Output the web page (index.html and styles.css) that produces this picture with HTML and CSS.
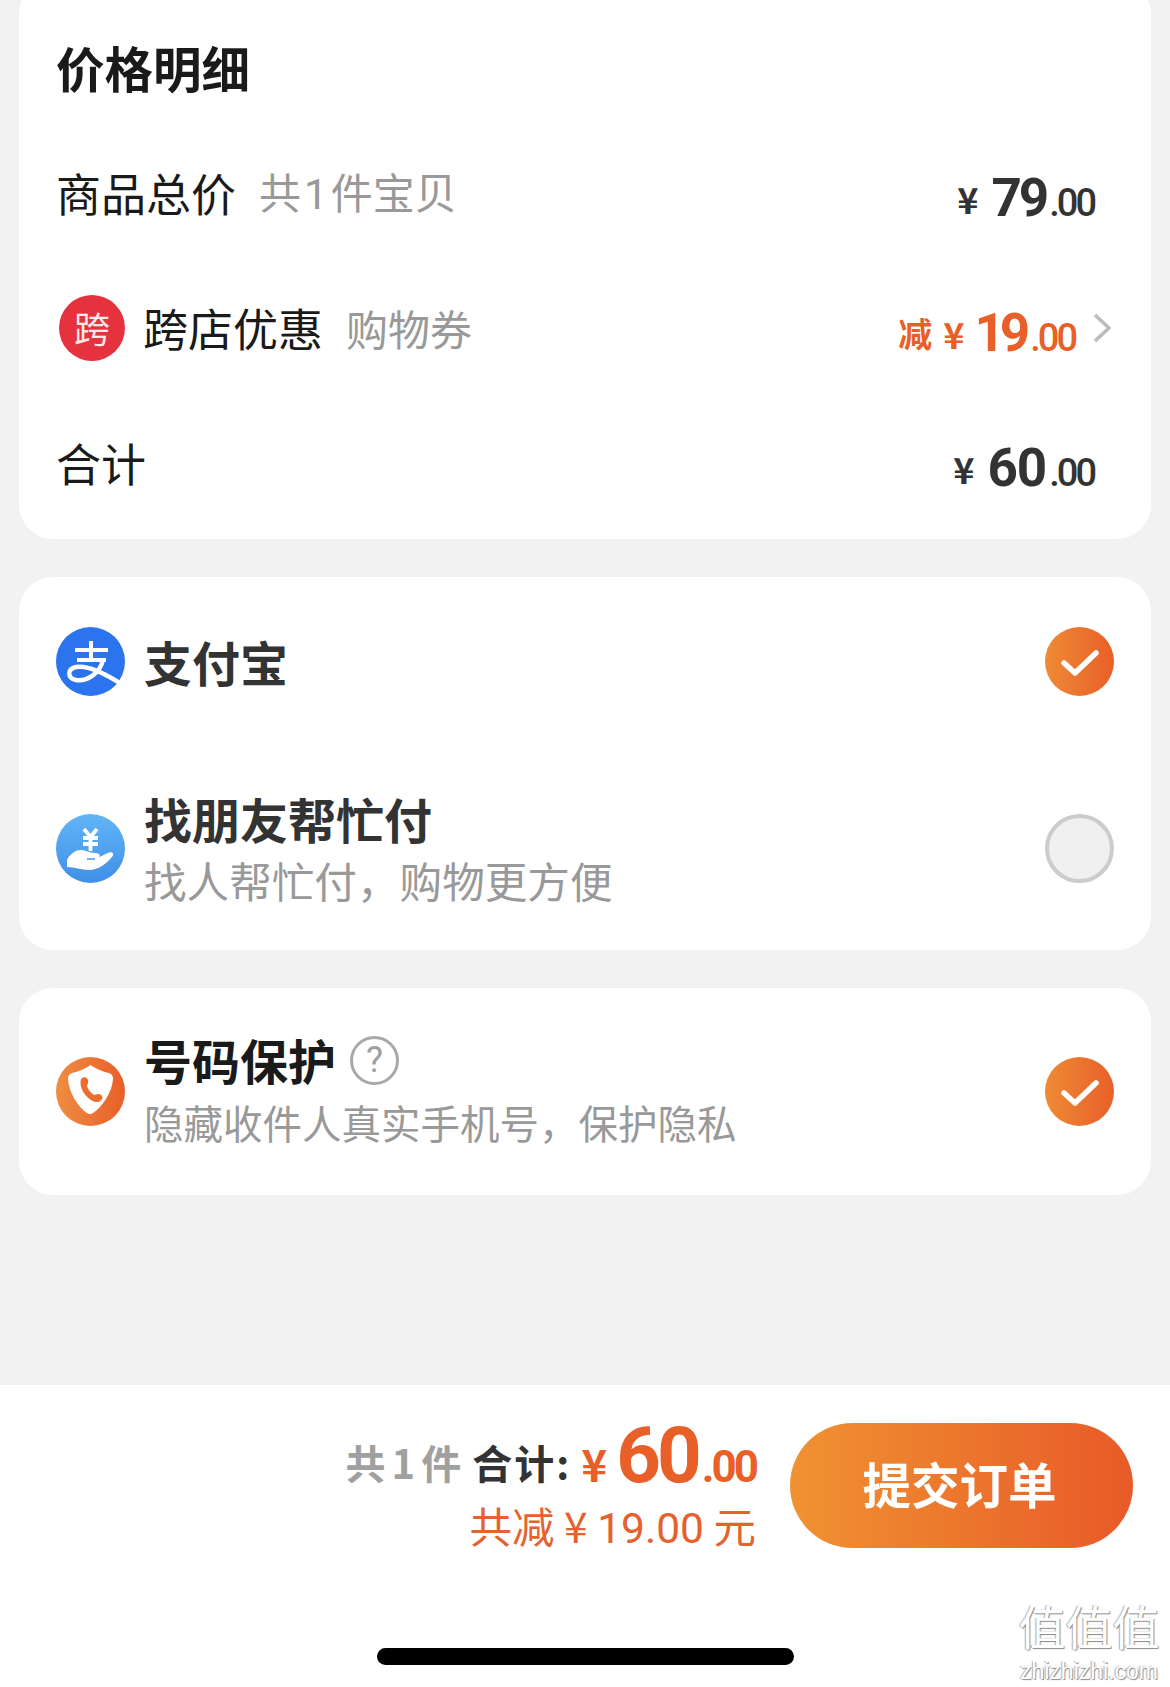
FILE: index.html
```html
<!DOCTYPE html>
<html lang="zh-CN">
<head>
    <meta charset="UTF-8">
    <meta name="viewport" content="width=device-width, initial-scale=1.0">
    <title>确认订单</title>
    <link rel="stylesheet" href="styles.css">
</head>
<body>
    <div class="page">
        <div class="content">
            <div class="card card-price">
                <h3 class="card-title">价格明细</h3>

                <div class="price-row">
                    <span class="label">商品总价</span>
                    <span class="note">共<span class="note-num">1</span>件宝贝</span>
                    <span class="amount"><span class="yen">¥</span><span class="big">79</span><span class="small">.00</span></span>
                </div>

                <div class="price-row">
                    <span class="badge">跨</span>
                    <span class="label">跨店优惠</span>
                    <span class="note">购物券</span>
                    <span class="amount amount-off"><span class="off-word">减</span><span class="yen">¥</span><span class="big">19</span><span class="small">.00</span></span>
                    <svg class="chevron" viewBox="0 0 18 30"><polyline points="2,2 16,15 2,28" fill="none" stroke="#bbb" stroke-width="3.6"/></svg>
                </div>

                <div class="price-row">
                    <span class="label">合计</span>
                    <span class="amount"><span class="yen">¥</span><span class="big big-wide">60</span><span class="small">.00</span></span>
                </div>
            </div>

            <div class="card">
                <div class="option option-alipay">
                    <svg class="option-icon" viewBox="0 0 69 69">
                        <circle cx="34.5" cy="34.5" r="34.5" fill="#2b74ee"/>
                        <path d="M19 23H52M35 14V33M21 33H50" fill="none" stroke="#fff" stroke-width="4"/>
                        <path d="M47 33C44 46 31 55 20 53C11 51 11 42 20 40C31 38 50 47 67 58" fill="none" stroke="#fff" stroke-width="4.4"/>
                    </svg>
                    <div class="option-text">
                        <div class="option-name">支付宝</div>
                    </div>
                    <span class="radio radio-on">
                        <svg viewBox="0 0 69 69"><polyline points="19,36 30,46 51,26" fill="none" stroke="#fff" stroke-width="5.5" stroke-linecap="round" stroke-linejoin="round"/></svg>
                    </span>
                </div>
                <div class="option option-friend">
                    <svg class="option-icon" viewBox="0 0 69 69">
                        <defs>
                            <linearGradient id="blue" x1="0" y1="0" x2="0" y2="1">
                                <stop offset="0" stop-color="#62b5f6"/>
                                <stop offset="1" stop-color="#3f8fe8"/>
                            </linearGradient>
                        </defs>
                        <circle cx="34.5" cy="34.5" r="34.5" fill="url(#blue)"/>
                        <path d="M28 15L34.5 23L41 15M27 24H42M27 30H42M34.5 22V37" fill="none" stroke="#fff" stroke-width="3.8"/>
                        <path d="M11 46C13 41 19 36 25 36C30 36 33 39 39 39C44 39 45 42 42 44L36 45C41 45 47 41 52 39C56 37 59 40 56 43C51 49 43 56 33 56C25 56 19 53 11 53Z" fill="#fff"/>
                        <path d="M31 45H39" stroke="#4c9ded" stroke-width="1.6" fill="none"/>
                    </svg>
                    <div class="option-text">
                        <div class="option-name option-name-gap">找朋友帮忙付</div>
                        <div class="option-desc">找人帮忙付，购物更方便</div>
                    </div>
                    <span class="radio"></span>
                </div>
            </div>

            <div class="card">
                <div class="option option-phone">
                    <svg class="option-icon" viewBox="0 0 69 69">
                        <defs>
                            <linearGradient id="orange" x1="0" y1="0" x2="1" y2="0">
                                <stop offset="0" stop-color="#ef8d42"/>
                                <stop offset="1" stop-color="#e85f28"/>
                            </linearGradient>
                        </defs>
                        <circle cx="34.5" cy="34.5" r="34.5" fill="url(#orange)"/>
                        <path d="M34.5 8C40 12 48 15 53 16C56 17 57 19 57 22C56 36 46 50 37 56C35 57.5 33 57.5 31 56C22 50 13 36 12 22C12 19 13 17 16 16C21 15 29 12 34.5 8Z" fill="#fff"/>
                        <path d="M25 22C28 19 31 20 32 23C33 26 31 28 31 29C32 33 35 36 38 38C40 38 42 36 45 38C48 40 46 44 42 45C34 46 22 33 25 22Z" fill="#ea6e30"/>
                    </svg>
                    <div class="option-text">
                        <div class="option-name option-name-dark">号码保护<span class="help">?</span></div>
                        <div class="option-desc option-desc-small">隐藏收件人真实手机号，保护隐私</div>
                    </div>
                    <span class="radio radio-on">
                        <svg viewBox="0 0 69 69"><polyline points="19,36 30,46 51,26" fill="none" stroke="#fff" stroke-width="5.5" stroke-linecap="round" stroke-linejoin="round"/></svg>
                    </span>
                </div>
            </div>
        </div>

        <div class="footer">
            <div class="footer-main">
                <div class="summary">
                    <div class="summary-total"><span class="count">共 1 件</span><span class="total-word">合计:</span><span class="yen">¥</span><span class="big">60</span><span class="small">.00</span></div>
                    <div class="summary-off">共减 ¥ <span class="off-num">19.00</span> 元</div>
                </div>
                <button class="submit">提交订单</button>
            </div>
            <div class="home-bar"></div>
        </div>

        <div class="watermark">
            <div class="watermark-mark">值值值</div>
            <div class="watermark-site">zhizhizhi.com</div>
        </div>
    </div>
</body>
</html>
```

FILE: styles.css
```css
* {
    box-sizing: border-box;
}
body {
    margin: 0;
    font-family: "Noto Sans CJK SC", "Noto Sans", sans-serif;
    background-color: #f2f2f2;
    color: #1a1a1a;
}
.page {
    position: relative;
    width: 1170px;
    height: 1687px;
    overflow: hidden;
    display: flex;
    flex-direction: column;
}
.content {
    flex: 1;
    padding: 0 19px;
    display: flex;
    flex-direction: column;
    gap: 38px;
}
.card {
    background-color: #fff;
    border-radius: 34px;
}

/* price card */
.card-price {
    margin-top: -20px;
    padding: 57px 37px 9px 37px;
}
.card-title {
    margin: 0 0 28px;
    font-size: 48.5px;
    line-height: 60px;
    font-weight: 700;
}
.price-row {
    height: 135px;
    display: flex;
    align-items: center;
}
.label {
    font-size: 45px;
    line-height: 60px;
    color: #1a1a1a;
}
.note {
    margin-left: 23px;
    font-size: 42px;
    line-height: 60px;
    color: #999;
}
.note-num {
    margin: 0 3px;
    font-family: Roboto, sans-serif;
}
.badge {
    width: 66px;
    height: 66px;
    margin: 0 18px 0 3px;
    border-radius: 50%;
    background-color: #e5323e;
    color: #fde9ea;
    font-size: 36px;
    line-height: 64px;
    text-align: center;
}
.amount {
    margin-left: auto;
    margin-right: 20px;
    padding-top: 10px;
    white-space: nowrap;
    font-family: Roboto, sans-serif;
    font-weight: 500;
    color: #333;
}
.amount .yen {
    margin-right: 13px;
    vertical-align: 2px;
    font-family: "Noto Sans CJK SC", sans-serif;
    font-size: 36px;
    font-weight: 700;
}
.amount .big {
    font-size: 53px;
    font-weight: 700;
    letter-spacing: -3px;
    margin-right: 3px;
}
.amount .big-wide {
    letter-spacing: -1px;
}
.amount .small {
    font-size: 38px;
    letter-spacing: -3px;
}
.amount-off {
    margin-right: 1px;
    color: #e85f28;
}
.amount-off .yen {
    margin-right: 10px;
}
.amount-off .big {
    letter-spacing: -5px;
    margin-right: 5px;
}
.off-word {
    margin-right: 11px;
    vertical-align: 4px;
    font-family: "Noto Sans CJK SC", sans-serif;
    font-size: 34px;
    font-weight: 700;
}
.chevron {
    width: 18px;
    height: 30px;
    margin: 0 3px 0 17px;
}

/* payment and protection options */
.option {
    display: flex;
    align-items: center;
    padding: 0 37px;
}
.option-alipay {
    height: 168px;
}
.option-friend {
    height: 205px;
    padding-top: 1px;
}
.option-phone {
    height: 207px;
}
.option-icon {
    width: 69px;
    height: 69px;
    flex-shrink: 0;
}
.option-text {
    flex: 1;
    margin-left: 19px;
}
.option-phone .option-text {
    padding-bottom: 4px;
}
.option-name {
    font-size: 48px;
    line-height: 60px;
    font-weight: 700;
    color: #333;
    display: flex;
    align-items: center;
}
.option-name-gap {
    margin-bottom: 3px;
}
.option-name-dark {
    margin-bottom: 4px;
    color: #1a1a1a;
}
.option-desc {
    font-size: 42.6px;
    line-height: 58px;
    color: #999;
}
.option-desc-small {
    font-size: 39.5px;
}
.help {
    width: 49px;
    height: 49px;
    margin: 4px 0 0 14px;
    border: 3.5px solid #a8a8a8;
    border-radius: 50%;
    color: #a0a0a0;
    font-family: Roboto, sans-serif;
    font-size: 36px;
    font-weight: 400;
    line-height: 42px;
    text-align: center;
}
.radio {
    width: 69px;
    height: 69px;
    flex-shrink: 0;
    border: 4px solid #ccc;
    border-radius: 50%;
    background-color: #f0f0f0;
}
.radio-on {
    border: 0;
    background: linear-gradient(to right, #ef8a35, #e85f28);
}
.radio-on svg {
    display: block;
    width: 69px;
    height: 69px;
}

/* bottom bar */
.footer {
    height: 302px;
    background-color: #fff;
}
.footer-main {
    height: 163px;
    display: flex;
    justify-content: flex-end;
    align-items: flex-start;
    padding: 38px 37px 0 0;
}
.summary {
    margin-right: 34px;
    text-align: right;
}
.summary-total {
    height: 70px;
    white-space: nowrap;
    font-size: 40px;
    line-height: 66px;
    font-weight: 700;
}
.count {
    margin-right: 11px;
    vertical-align: 3px;
    word-spacing: -3px;
    color: #a0a0a0;
}
.total-word {
    margin-right: 10px;
    vertical-align: 3px;
    letter-spacing: 2px;
    color: #333;
}
.summary-total .yen,
.summary-total .big,
.summary-total .small {
    color: #e85f28;
    font-family: Roboto, sans-serif;
}
.summary-total .yen {
    font-family: "Noto Sans CJK SC", sans-serif;
    font-size: 44px;
    margin-right: 9px;
}
.summary-total .big {
    font-size: 78px;
    letter-spacing: -4px;
    margin-right: 4px;
}
.summary-total .small {
    font-size: 44px;
    letter-spacing: -3px;
}
.summary-off {
    margin-top: 6px;
    font-size: 42.5px;
    line-height: 52px;
    white-space: nowrap;
    color: #e4622d;
}
.off-num {
    font-family: Roboto, sans-serif;
}
.submit {
    width: 343px;
    height: 125px;
    padding: 0 4px 6px 0;
    border: 0;
    border-radius: 63px;
    background: linear-gradient(to right, #f09232, #e85a28);
    color: #fff;
    font-family: "Noto Sans CJK SC", sans-serif;
    font-size: 48.5px;
    font-weight: 700;
}
.home-bar {
    width: 417px;
    height: 17px;
    margin: 100px auto 0;
    border-radius: 9px;
    background-color: #000;
}

/* site watermark over the corner */
.watermark {
    position: absolute;
    right: 10px;
    bottom: 5px;
    width: 142px;
    text-align: center;
    color: #fff;
    text-shadow: 1px 1px 1px #888, -1px 0 1px #aaa;
}
.watermark-mark {
    margin-bottom: 9px;
    font-size: 47px;
    line-height: 52px;
    white-space: nowrap;
}
.watermark-site {
    font-family: "Liberation Sans", sans-serif;
    font-size: 23px;
    line-height: 22px;
}
```
